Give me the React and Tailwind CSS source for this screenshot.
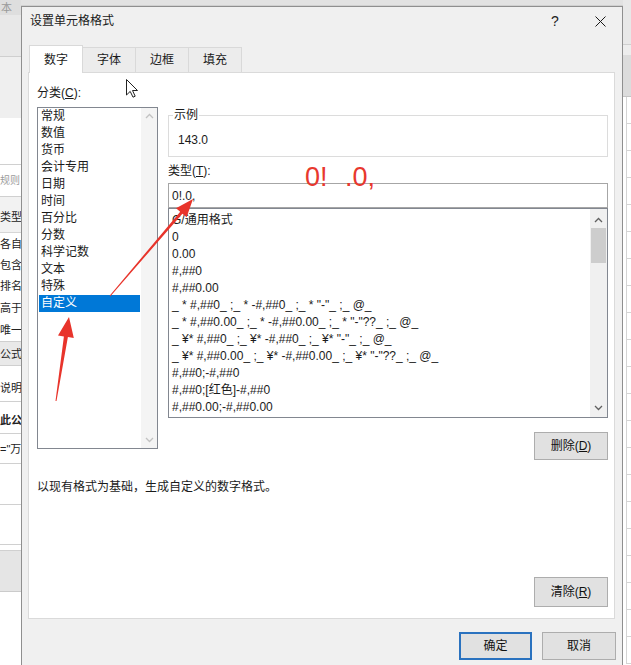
import React from "react";

const categories = [
  "常规",
  "数值",
  "货币",
  "会计专用",
  "日期",
  "时间",
  "百分比",
  "分数",
  "科学记数",
  "文本",
  "特殊",
  "自定义",
];

const formats = [
  "G/通用格式",
  "0",
  "0.00",
  "#,##0",
  "#,##0.00",
  '_ * #,##0_ ;_ * -#,##0_ ;_ * "-"_ ;_ @_',
  '_ * #,##0.00_ ;_ * -#,##0.00_ ;_ * "-"??_ ;_ @_',
  '_ ¥* #,##0_ ;_ ¥* -#,##0_ ;_ ¥* "-"_ ;_ @_',
  '_ ¥* #,##0.00_ ;_ ¥* -#,##0.00_ ;_ ¥* "-"??_ ;_ @_',
  "#,##0;-#,##0",
  "#,##0;[红色]-#,##0",
  "#,##0.00;-#,##0.00",
];

function Chevron({ up, color }) {
  return (
    <svg width="9" height="6" viewBox="0 0 9 6" className="shrink-0">
      <path
        d={up ? "M1 5 L4.5 1.5 L8 5" : "M1 1 L4.5 4.5 L8 1"}
        fill="none"
        stroke={color}
        strokeWidth="1.3"
      />
    </svg>
  );
}

function SheetLeft() {
  return (
    <div className="w-[21px] h-[665px] shrink-0 overflow-hidden flex flex-col text-[11px] leading-[14px] text-[#222] whitespace-nowrap">
      <div className="h-[15px] shrink-0 bg-[#dedede] text-[#9a9a9a] pl-px leading-[16px]">本</div>
      <div className="h-[42px] shrink-0 bg-[#e8e8e8] border-b border-[#cfcfcf]" />
      <div className="h-[61px] shrink-0 bg-[#efefef]" />
      <div className="h-[47px] shrink-0 bg-white border-b border-[#d0d0d0]" />
      <div className="h-[32px] shrink-0 pt-[9px] text-[10px] text-[#9b9b9b] border-b border-[#d0d0d0]">规则</div>
      <div className="h-[36px] shrink-0 pt-[13px] bg-[#f2f2f2] border-b border-[#d6d6d6]">类型</div>
      <div className="h-[22px] shrink-0 pt-[4px]">各自</div>
      <div className="h-[20px] shrink-0 pt-[3px]">包含</div>
      <div className="h-[22px] shrink-0 pt-[4px]">排名</div>
      <div className="h-[21px] shrink-0 pt-[4px]">高于</div>
      <div className="h-[23px] shrink-0 pt-[5px]">唯一</div>
      <div className="h-[25px] shrink-0 pt-[5px] bg-[#e9e9e9] border-y border-[#cfcfcf]">公式</div>
      <div className="h-[36px] shrink-0 pt-[15px] border-b border-[#d0d0d0]">说明</div>
      <div className="h-[32px] shrink-0 pt-[11px] font-bold border-b border-[#d0d0d0]">此公</div>
      <div className="h-[30px] shrink-0 pt-[8px] border-b border-[#d0d0d0]">="万</div>
      <div className="h-[41px] shrink-0 border-b border-[#d0d0d0]" />
      <div className="h-[40px] shrink-0 border-b border-[#d0d0d0]" />
      <div className="h-[6px] shrink-0 border-b border-[#d0d0d0]" />
      <div className="h-[41px] shrink-0 bg-[#e5e5e5] border-b border-[#cbcbcb]" />
      <div className="flex-1 bg-white" />
    </div>
  );
}

function SheetRight() {
  const rows = Array.from({ length: 21 }, (_, i) => i);
  return (
    <div className="w-[8px] h-[665px] shrink-0 overflow-hidden flex flex-col">
      <div className="h-[45px] shrink-0 bg-[#e8e8e8] border-b border-[#cfcfcf]" />
      <div className="h-[10px] shrink-0 bg-[#ededed]" />
      <div className="h-[42px] shrink-0 bg-[#dcdcdc] border-b border-[#c4c4c4]" />
      {rows.map((r) => (
        <div key={r} className="h-[27px] shrink-0 ml-[3px] border-l border-b border-[#d4d4d4]" />
      ))}
    </div>
  );
}

function Button({ children, primary, className }) {
  return (
    <div
      className={
        primary
          ? "flex items-center justify-center bg-[#e1e1e1] border-2 border-[#2a72bf] text-[12px] text-[#111] " + className
          : "flex items-center justify-center bg-[#e1e1e1] border border-[#adadad] text-[12px] text-[#111] " + className
      }
    >
      {children}
    </div>
  );
}

function Tab({ label, active }) {
  return active ? (
    <div className="relative z-10 -mb-px h-[28px] w-[54px] flex items-center justify-center bg-white border-x border-t border-[#d9d9d9]">
      {label}
    </div>
  ) : (
    <div className="h-[25px] -ml-px flex items-center justify-center bg-[#ececec] border-x border-t border-[#d9d9d9] w-[54px]">
      {label}
    </div>
  );
}

function CategoryList() {
  return (
    <div className="mt-[7px] h-[342px] border border-[#828790] flex bg-white">
      <div className="flex-1 flex flex-col">
        {categories.map((c, i) =>
          i === categories.length - 1 ? (
            <div key={c} className="h-[17px] leading-[17px] mx-px pl-[2px] bg-[#0078d7] text-white">
              {c}
            </div>
          ) : (
            <div key={c} className="h-[17px] leading-[17px] mx-px pl-[2px]">
              {c}
            </div>
          )
        )}
      </div>
      <div className="w-[16px] bg-[#f4f4f4] flex flex-col items-center justify-between py-[5px]">
        <Chevron up color="#c2c2c2" />
        <Chevron color="#c2c2c2" />
      </div>
    </div>
  );
}

function FormatList() {
  return (
    <div className="h-[210px] border border-[#828790] flex bg-white">
      <div className="flex-1 flex flex-col pt-[3px] pl-[3px] overflow-hidden">
        {formats.map((f) => (
          <div key={f} className="h-[17px] leading-[17px] whitespace-pre">
            {f}
          </div>
        ))}
      </div>
      <div className="w-[17px] bg-[#f0f0f0] flex flex-col items-center pt-[8px] pb-[6px]">
        <Chevron up color="#606060" />
        <div className="mt-[5px] h-[35px] w-[15px] bg-[#cdcdcd]" />
        <div className="flex-1" />
        <Chevron color="#606060" />
      </div>
    </div>
  );
}

function Dialog() {
  return (
    <div className="flex flex-col flex-1 bg-[#f0f0f0] border border-b-0 border-[#8f8f8f]">
      {/* title bar */}
      <div className="flex h-[28px] items-center shrink-0">
        <span className="pl-[8px]">设置单元格格式</span>
        <div className="ml-auto flex h-full">
          <div className="w-[46px] flex items-center justify-center text-[14px] text-[#222]">?</div>
          <div className="w-[44px] flex items-center justify-center">
            <svg width="11" height="11" viewBox="0 0 11 11">
              <path d="M0.5 0.5 L10.5 10.5 M10.5 0.5 L0.5 10.5" stroke="#1a1a1a" strokeWidth="1" />
            </svg>
          </div>
        </div>
      </div>

      {/* tabs */}
      <div className="flex items-end h-[27px] mt-[10px] pl-[7px] shrink-0">
        <Tab label="数字" active />
        <Tab label="字体" />
        <Tab label="边框" />
        <Tab label="填充" />
      </div>

      {/* tab page */}
      <div className="w-[587px] h-[547px] ml-[6px] shrink-0 border border-[#dadada] bg-white flex flex-col pl-[8px] pr-[6px]">
        <div className="flex gap-[10px] pt-[13px]">
          <div className="w-[121px] flex flex-col">
            <div className="h-[14px]">
              分类(<span className="underline">C</span>):
            </div>
            <CategoryList />
          </div>

          <div className="w-[440px] flex flex-col">
            <fieldset className="mt-[22px] border border-[#dcdcdc] pt-[11px] pb-[9px]">
              <legend className="ml-[4px] px-px h-[14px] leading-[14px]">示例</legend>
              <div className="pl-[9px] h-[14px]">143.0</div>
            </fieldset>
            <div className="mt-[7px] h-[14px]">
              类型(<span className="underline">T</span>):
            </div>
            <div className="mt-[5px] h-[25px] border border-[#a6a6a6] flex items-center pl-[3px] bg-white">0!.0,</div>
            <FormatList />
            <Button className="self-end mt-[14px] w-[74px] h-[28px]">
              删除(<span className="underline">D</span>)
            </Button>
          </div>
        </div>

        <div className="mt-[20px] h-[14px]">以现有格式为基础，生成自定义的数字格式。</div>

        <Button className="mt-auto mb-[11px] self-end w-[74px] h-[30px]">
          清除(<span className="underline">R</span>)
        </Button>
      </div>

      {/* dialog buttons */}
      <div className="flex justify-end gap-[10px] mt-[13px] pr-[6px]">
        <Button primary className="w-[73px] h-[28px]">确定</Button>
        <Button className="w-[74px] h-[28px]">取消</Button>
      </div>
    </div>
  );
}

function Annotations() {
  return (
    <>
      <svg
        className="absolute left-0 top-0 pointer-events-none"
        width="631"
        height="665"
        viewBox="0 0 631 665"
      >
        {/* arrow pointing at the selected category */}
        <polygon
          points="69,317 73.8,338 67.9,337.1 56.5,401.1 55.5,400.9 63.9,336.5 58,335.6"
          fill="#e8342b"
        />
        {/* arrow pointing at the type field */}
        <polygon
          points="193,199 186.6,217.2 182.4,213.7 110.4,296.3 109.6,295.7 180.2,211.7 176,208.2"
          fill="#e8342b"
        />
        {/* mouse pointer */}
        <path
          d="M126.5 79.5 L126.5 95 L130.2 91.4 L133 97.2 L135.2 96.2 L132.5 90.5 L137.5 90.5 Z"
          fill="#ffffff"
          stroke="#222"
          strokeWidth="1"
          strokeLinejoin="round"
        />
      </svg>
      <span className="absolute left-[305px] top-[164px] text-[27px] leading-none text-[#e8382e] whitespace-pre">0!</span>
      <span className="absolute left-[345px] top-[164px] text-[27px] leading-none text-[#e8382e] whitespace-pre">.0,</span>
    </>
  );
}

export default function App() {
  return (
    <div className="relative flex w-[631px] h-[665px] overflow-hidden bg-white text-[12px] leading-[14px] text-[#1a1a1a] [font-family:'Liberation_Sans','Noto_Sans_CJK_SC',sans-serif]">
      <SheetLeft />
      <div className="flex flex-col w-[602px] h-[665px] shrink-0">
        <div className="h-[6px] shrink-0 bg-[#e2e2e2] border-b border-[#d0d0d0]" />
        <Dialog />
      </div>
      <SheetRight />
      <Annotations />
    </div>
  );
}
